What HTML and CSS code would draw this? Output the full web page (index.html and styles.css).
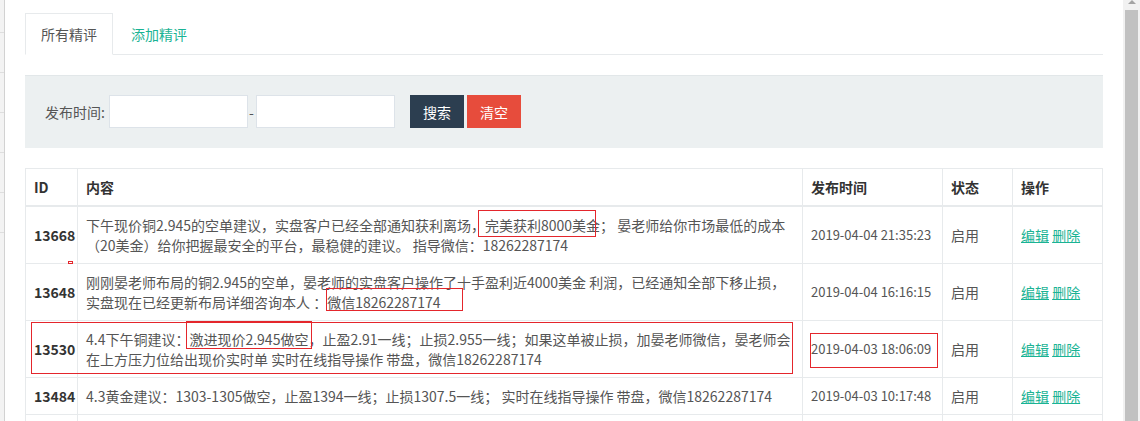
FILE: index.html
```html
<!DOCTYPE html>
<html>
  <head>
    <meta charset="utf-8">
    <meta name="viewport" content="width=device-width, initial-scale=1.0">
    <title>精评管理</title>
    <link rel="stylesheet" href="styles.css">
  </head>

  <body>
    <div class="page">
      <!-- left menu edge, mostly hidden -->
      <div class="side">
        <div class="side-item first"></div>
        <div class="side-item"></div>
        <div class="side-item"></div>
        <div class="side-item"></div>
        <div class="side-item"></div>
        <div class="side-item"></div>
      </div>

      <div class="main">
        <ul class="tabs">
          <li class="active"><a href="#">所有精评</a></li>
          <li><a href="#">添加精评</a></li>
        </ul>

        <!-- Search bar -->
        <div class="search-box">
          <label for="dateFrom">发布时间:</label>
          <input type="text" id="dateFrom">
          <span class="dash">-</span>
          <input type="text" id="dateTo">
          <button class="btn btn-search">搜索</button>
          <button class="btn btn-clear">清空</button>
        </div>

        <!-- Results -->
        <table class="list">
          <colgroup>
            <col class="col-id">
            <col class="col-content">
            <col class="col-time">
            <col class="col-state">
            <col>
          </colgroup>
          <thead>
            <tr>
              <th>ID</th>
              <th>内容</th>
              <th>发布时间</th>
              <th>状态</th>
              <th>操作</th>
            </tr>
          </thead>
          <tbody>
            <tr>
              <td class="id">13668</td>
              <td>下午现价铜2.945的空单建议，实盘客户已经全部通知获利离场，完美获利8000美金； 晏老师给你市场最低的成本（20美金）给你把握最安全的平台，最稳健的建议。 指导微信：18262287174</td>
              <td class="time">2019-04-04 21:35:23</td>
              <td>启用</td>
              <td><a href="#">编辑</a> <a href="#">删除</a></td>
            </tr>
            <tr>
              <td class="id">13648</td>
              <td>刚刚晏老师布局的铜2.945的空单，晏老师的实盘客户操作了十手盈利近4000美金 利润，已经通知全部下移止损，实盘现在已经更新布局详细咨询本人 ：微信18262287174</td>
              <td class="time">2019-04-04 16:16:15</td>
              <td>启用</td>
              <td><a href="#">编辑</a> <a href="#">删除</a></td>
            </tr>
            <tr>
              <td class="id">13530</td>
              <td>4.4下午铜建议：激进现价2.945做空，止盈2.91一线；止损2.955一线；如果这单被止损，加晏老师微信，晏老师会在上方压力位给出现价实时单 实时在线指导操作 带盘，微信18262287174</td>
              <td class="time">2019-04-03 18:06:09</td>
              <td>启用</td>
              <td><a href="#">编辑</a> <a href="#">删除</a></td>
            </tr>
            <tr>
              <td class="id">13484</td>
              <td>4.3黄金建议：1303-1305做空，止盈1394一线；止损1307.5一线； 实时在线指导操作 带盘，微信18262287174</td>
              <td class="time">2019-04-03 10:17:48</td>
              <td>启用</td>
              <td><a href="#">编辑</a> <a href="#">删除</a></td>
            </tr>
            <!-- next row starts below the fold -->
            <tr class="fold-row">
              <td></td>
              <td></td>
              <td></td>
              <td></td>
              <td></td>
            </tr>
          </tbody>
        </table>
      </div>

      <!-- window scrollbar -->
      <div class="scrollbar">
        <span class="scroll-arrow"></span>
        <span class="scroll-thumb"></span>
      </div>
    </div>

    <!-- red marks drawn over the screenshot -->
    <div class="marks">
      <span class="mark" style="left: 478px; top: 210px; width: 118px; height: 27px;"></span>
      <span class="mark" style="left: 68px; top: 261px; width: 5px; height: 3px;"></span>
      <span class="mark" style="left: 326px; top: 288px; width: 137px; height: 23px;"></span>
      <span class="mark" style="left: 31px; top: 322px; width: 762px; height: 52px;"></span>
      <span class="mark" style="left: 186px; top: 321px; width: 126px; height: 28px;"></span>
      <span class="mark" style="left: 810px; top: 333px; width: 128px; height: 35px;"></span>
    </div>
  </body>
</html>
```

FILE: styles.css
```css
/* Palette: #ecf0f1 panel, #2c3e50 / #e74c3c buttons, #1ab394 links, #e7eaec lines */

* {
  box-sizing: border-box;
}

body {
  margin: 0;
  height: 421px;
  overflow: hidden;
  background-color: #FFFFFF;
  color: #555555;
  font-family: "Noto Sans CJK SC", sans-serif;
  font-size: 14px;
  line-height: 20px;
}

a {
  color: #1ab394;
}

.page {
  display: flex;
  height: 421px;
}

/* Left menu edge */
.side {
  width: 5px;
  background-color: #f3f3f3;
  border-right: 1px solid #d2d2d2;
  display: flex;
  flex-direction: column;
}
.side-item {
  height: 40px;
  border-bottom: 1px solid #dedede;
}
.side-item.first {
  height: 33px;
}

/* Main column */
.main {
  flex: 1;
  padding: 13px 20px 0 20px;
}

/* Tabs */
.tabs {
  display: flex;
  list-style: none;
  margin: 0;
  padding: 0;
  border-bottom: 1px solid #e7eaec;
}
.tabs li {
  margin-right: 2px;
  margin-bottom: -1px;
}
.tabs a {
  display: block;
  padding: 10px 15px;
  border: 1px solid transparent;
  text-decoration: none;
  color: #1ab394;
}
.tabs .active a {
  color: #555555;
  background-color: #FFFFFF;
  border-color: #e7eaec;
  border-bottom-color: #FFFFFF;
}

/* Search bar */
.search-box {
  margin-top: 20px;
  display: flex;
  align-items: center;
  background-color: #ecf0f1;
  border-top: 1px solid #e2e7e9;
  padding: 19px 20px 20px 20px;
}
.search-box label {
  margin-right: 4px;
}
.search-box input {
  width: 139px;
  height: 33px;
  border: 1px solid #dde3e9;
  background-color: #FFFFFF;
  outline: none;
}
.dash {
  width: 8px;
  padding-left: 1px;
}
.btn {
  width: 54px;
  height: 33px;
  border: none;
  color: #FFFFFF;
  font-family: inherit;
  font-size: 14px;
  cursor: pointer;
}
.btn-search {
  margin-left: 15px;
  background-color: #2c3e50;
}
.btn-clear {
  margin-left: 3px;
  background-color: #e74c3c;
}

/* Table */
.list {
  margin-top: 20px;
  width: 100%;
  border-collapse: collapse;
  table-layout: fixed;
}
.col-id {
  width: 52px;
}
.col-content {
  width: 725px;
}
.col-time {
  width: 140px;
}
.col-state {
  width: 70px;
}
.list th,
.list td {
  border: 1px solid #e7eaec;
  padding: 8px;
  text-align: left;
  vertical-align: middle;
}
.list th {
  color: #333333;
  font-weight: bold;
  border-bottom-width: 2px;
}
.list td.id {
  color: #333333;
  font-weight: bold;
}
.list td.time {
  font-size: 13px;
  white-space: nowrap;
}
.fold-row td {
  height: 37px;
}

/* Scrollbar */
.scrollbar {
  width: 17px;
  background-color: #f1f1f1;
  display: flex;
  flex-direction: column;
  align-items: center;
}
.scroll-arrow {
  width: 0;
  height: 0;
  border-left: 4px solid transparent;
  border-right: 4px solid transparent;
  border-bottom: 4px solid #a3a3a3;
}
.scroll-thumb {
  margin-top: 6px;
  width: 13px;
  flex: 1;
  background-color: #c1c1c1;
}

/* Annotation marks */
.marks {
  position: absolute;
  left: 0;
  top: 0;
}
.mark {
  position: absolute;
  border: 1px solid #e4262c;
}
```
